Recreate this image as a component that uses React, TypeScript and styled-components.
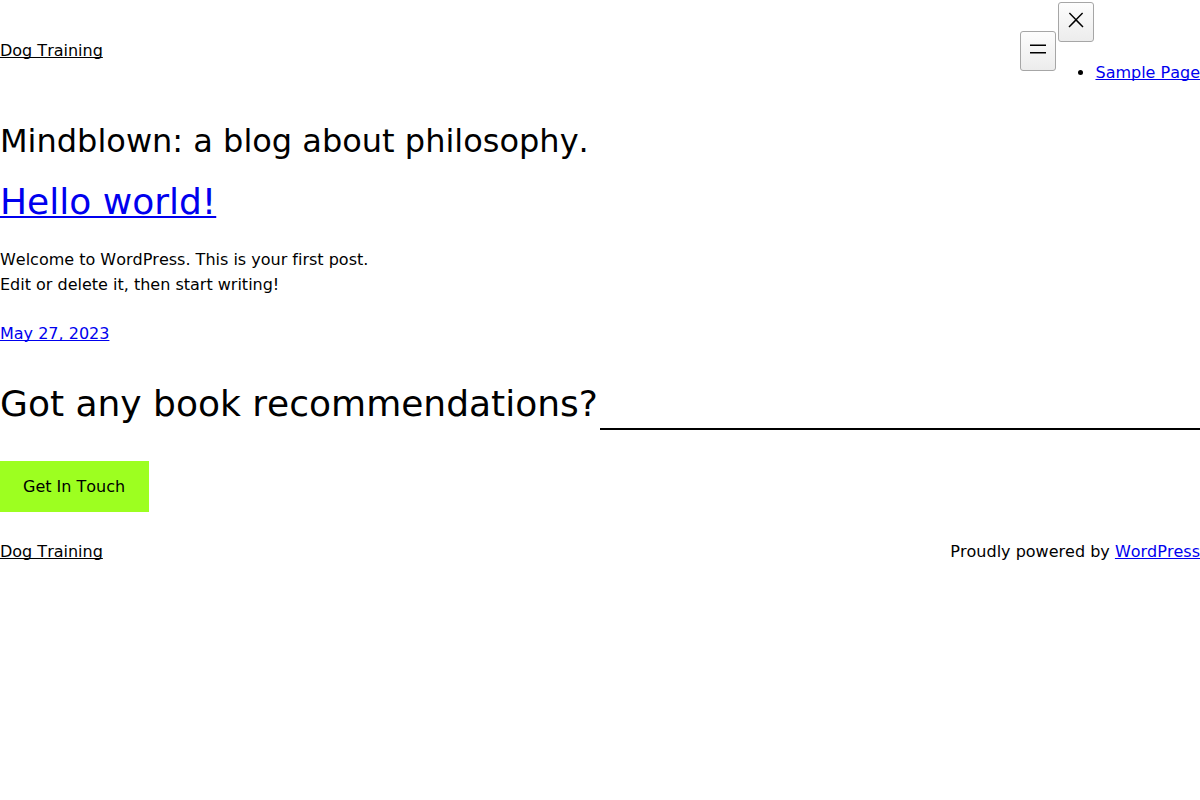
import React from "react";
import styled, { createGlobalStyle } from "styled-components";

const GlobalStyle = createGlobalStyle`
  body {
    margin: 0;
    background: #fff;
    color: #000;
    font-family: "DejaVu Sans", sans-serif;
    font-size: 16px;
    font-kerning: none;
    font-variant-ligatures: none;
    line-height: 25px;
  }
`;

const Link = styled.a<{ $plain?: boolean }>`
  color: ${(p) => (p.$plain ? "#000" : "#0000ee")};
  text-decoration: underline;
  text-decoration-skip-ink: none;
`;

const Bar = styled.div`
  display: flex;
  flex-wrap: wrap;
  align-items: center;
  justify-content: space-between;
`;

const Navigation = styled.nav`
  display: flex;
  align-items: center;
`;

const IconButton = styled.button`
  display: block;
  padding: 5px 5px 9px;
  border: 1px solid #a6a6a6;
  border-radius: 3px;
  background: linear-gradient(#fdfdfd, #ececec);
  color: #000;

  svg {
    display: block;
    fill: currentColor;
  }
`;

const Menu = styled.div`
  padding-top: 2px;

  ${IconButton} {
    margin-left: 2px;
  }
`;

const PageList = styled.ul`
  margin: 18px 0 16px;
  padding: 0 0 0 39px;
`;

const Main = styled.main`
  display: flex;
  flex-direction: column;
  padding: 21px 0 27px;
`;

const PageTitle = styled.h1`
  margin: 0 0 20px;
  font-size: 32px;
  font-weight: 400;
  line-height: 38px;
`;

const Heading = styled.h2`
  margin: 0;
  font-size: 36px;
  font-weight: 400;
  line-height: 43px;

  ${Link} {
    text-decoration-thickness: 2px;
    text-underline-offset: 2px;
  }
`;

const Post = styled.article`
  display: flex;
  flex-direction: column;
  gap: 24px;
`;

const Excerpt = styled.p`
  margin: 0;
`;

const Contact = styled.section`
  display: grid;
  grid-template-columns: 1fr 1fr;
  row-gap: 31px;
  padding-top: 36px;
`;

const Rule = styled.hr`
  align-self: end;
  width: 100%;
  margin: 0;
  border: 0;
  border-top: 2px solid #000;
`;

const Prompt = styled.div`
  padding-bottom: 5px;
  white-space: nowrap;
`;

const ActionLink = styled.a`
  justify-self: start;
  padding: 13px 24px 13px 23px;
  background: #9dff20;
  color: #000;
  text-decoration: none;
`;

export default function App() {
  return (
    <>
      <GlobalStyle />
      <Bar as="header">
        <Link $plain href="#home">Dog Training</Link>
        <Navigation aria-label="Main">
          <IconButton type="button" aria-label="Open menu">
            <svg width="24" height="24" viewBox="0 0 24 24" aria-hidden="true">
              <rect x="4" y="7.5" width="16" height="1.5" />
              <rect x="4" y="15" width="16" height="1.5" />
            </svg>
          </IconButton>
          <Menu>
            <IconButton type="button" aria-label="Close menu">
              <svg width="24" height="24" viewBox="0 0 24 24" aria-hidden="true">
                <path d="M13 11.8l6.1-6.3-1-1-6.1 6.2-6.1-6.2-1 1 6.1 6.3-6.5 6.7 1 1 6.5-6.6 6.5 6.6 1-1z" />
              </svg>
            </IconButton>
            <PageList>
              <li>
                <Link href="#sample-page">Sample Page</Link>
              </li>
            </PageList>
          </Menu>
        </Navigation>
      </Bar>
      <Main>
        <PageTitle>Mindblown: a blog about philosophy.</PageTitle>
        <Post>
          <Heading>
            <Link href="#hello-world">Hello world!</Link>
          </Heading>
          <Excerpt>
            Welcome to WordPress. This is your first post.
            <br />
            Edit or delete it, then start writing!
          </Excerpt>
          <time dateTime="2023-05-27">
            <Link href="#hello-world">May 27, 2023</Link>
          </time>
        </Post>
        <Contact>
          <Prompt>
            <Heading>Got any book recommendations?</Heading>
          </Prompt>
          <Rule />
          <ActionLink href="#contact">Get In Touch</ActionLink>
        </Contact>
      </Main>
      <Bar as="footer">
        <Link $plain href="#home">Dog Training</Link>
        <span>
          Proudly powered by <Link href="#wordpress">WordPress</Link>
        </span>
      </Bar>
    </>
  );
}
